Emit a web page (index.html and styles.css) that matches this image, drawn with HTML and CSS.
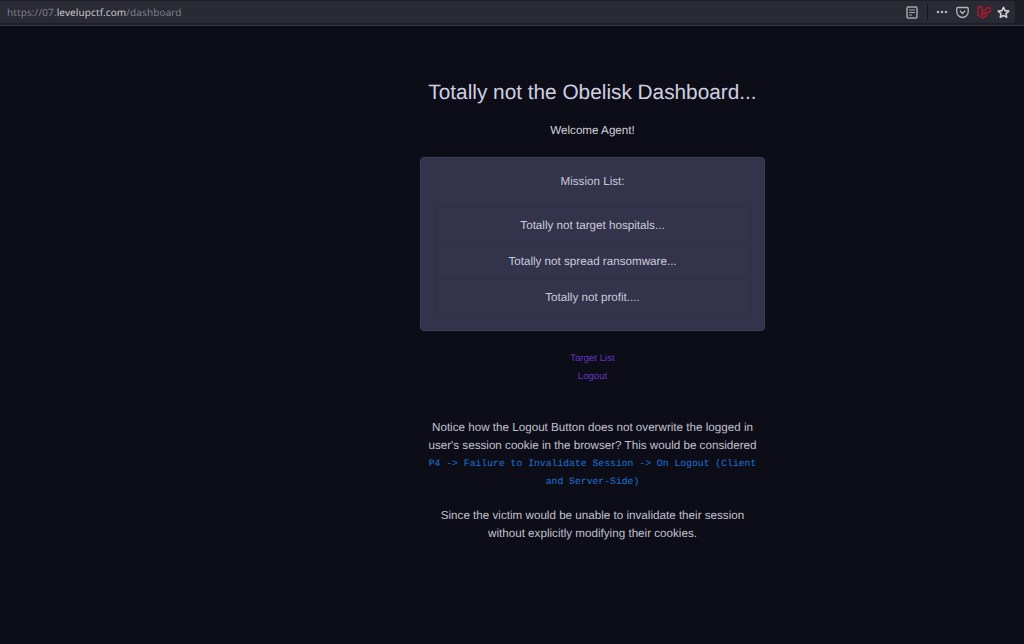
FILE: index.html
```html
<!DOCTYPE html>
<html lang="en">
<head>
<meta charset="utf-8">
<title>Dashboard</title>
<link rel="stylesheet" href="styles.css">
</head>
<body>
<header class="toolbar">
  <div class="urlbar">
    <div class="url"><span class="dim">https://07.</span><span class="host">levelupctf.com</span><span class="dim">/dashboard</span></div>
    <div class="actions">
      <svg class="icon reader" width="12" height="13" viewBox="0 0 12 13"><rect x="1" y="1" width="10" height="11" rx="1" fill="none" stroke="#a4a4a8" stroke-width="1.5"/><path d="M3 4h6M3 6.500h6M3 9h3" stroke="#a4a4a8" stroke-width="1.200"/></svg>
      <span class="sep"></span>
      <svg class="icon dots" width="12" height="14" viewBox="0 0 12 14"><circle cx="2" cy="7" r="1.300" fill="#b4b4b8"/><circle cx="6" cy="7" r="1.300" fill="#b4b4b8"/><circle cx="10" cy="7" r="1.300" fill="#b4b4b8"/></svg>
      <svg class="icon pocket" width="13" height="13" viewBox="0 0 13 13"><path d="M.8 2.500a1 1 0 0 1 1-1h9.400a1 1 0 0 1 1 1v3.300a5.700 5.700 0 0 1-11.400 0z" fill="none" stroke="#b4b4b8" stroke-width="1.300"/><path d="M3.900 4.800 6.500 7.400l2.600-2.600" fill="none" stroke="#b4b4b8" stroke-width="1.400"/></svg>
      <svg class="icon laravel" width="14" height="14" viewBox="0 0 14 14"><path d="M1 2.500v7.500l4.500 3 4-2.500V7M1 2.500l2-1 2 1V10l4.500-2.800M9.500 3.500l2-1.200 2 1.200V6l-4 2.300M5 7l4.500-3" fill="none" stroke="#a01a30" stroke-width="1.700"/></svg>
      <svg class="icon star" width="13" height="13" viewBox="0 0 14 14"><path d="M7 1.300 8.700 5l4 .5-3 2.700.8 4L7 10.200 3.500 12.200l.8-4-3-2.700 4-.5z" fill="none" stroke="#d0d0d4" stroke-width="1.700" stroke-linejoin="round"/></svg>
    </div>
  </div>
</header>
<main class="page">
  <div class="column">
    <h1 class="title">Totally not the Obelisk Dashboard...</h1>
    <p class="welcome">Welcome Agent!</p>
    <section class="card">
      <p class="card-title">Mission List:</p>
      <ul class="missions">
        <li class="mission">Totally not target hospitals...</li>
        <li class="mission">Totally not spread ransomware...</li>
        <li class="mission">Totally not profit....</li>
      </ul>
    </section>
    <nav class="links">
      <a class="link" href="#">Target List</a>
      <a class="link" href="#">Logout</a>
    </nav>
    <p class="notice">Notice how the Logout Button does not overwrite the logged in user's session cookie in the browser? This would be considered <code class="vrt">P4 -&gt; Failure to Invalidate Session -&gt; On Logout (Client and Server-Side)</code></p>
    <p class="notice second">Since the victim would be unable to invalidate their session without explicitly modifying their cookies.</p>
  </div>
</main>
</body>
</html>
```
FILE: styles.css
```css
* { box-sizing: border-box; }
html, body { margin: 0; height: 100%; }
body {
  background: #0d0d17;
  color: #c0c0d0;
  font-family: "Liberation Sans", Arial, sans-serif;
  font-size: 11.65px;
  line-height: 18px;
  text-rendering: geometricPrecision;
  overflow: hidden;
}
.toolbar {
  height: 26px;
  background: #1e1e26;
  border-bottom: 1px solid #3a3a42;
  padding: 1px 9px 1px 0;
}
.urlbar {
  height: 22px;
  background: #2a2a34;
  border-radius: 0 4px 4px 0;
  display: flex;
  align-items: center;
  justify-content: space-between;
  padding: 0 5px 0 7px;
}
.url { font-family: "Noto Sans", "Liberation Sans", sans-serif; font-size: 10px; color: #7d7d84; letter-spacing: .1px; }
.host { color: #c8c8cc; }
.actions { display: flex; align-items: center; }
.icon { display: block; margin-left: 7px; }
.reader { margin-right: 9px; }
.dots { margin-left: 8px; }
.pocket { margin-left: 8px; }
.laravel { margin-left: 8px; }
.star { margin-left: 6px; }
.sep { width: 1px; height: 16px; background: #16161c; }
.page { padding: 0 0 0 420px; }
.column { width: 345px; text-align: center; }
.title { margin: 0; padding-top: 53px; font-size: 20.8px; font-weight: 400; line-height: 28px; color: #cfcfe2; }
.welcome { margin: 15px 0 0; color: #d0d0dc; }
.card {
  margin-top: 17px;
  height: 174px;
  background: #33334b;
  border: 1px solid #3e3e56;
  border-radius: 4px;
  padding: 15px 14px 0;
}
.card-title { margin: 0; color: #c8c8d8; }
.missions { list-style: none; margin: 15px 0 0; padding: 0; border: 1px solid #2f2f45; border-radius: 4px; }
.mission { height: 36px; padding-top: 1px; line-height: 36px; color: #cbcbdb; border-bottom: 1px solid #2f2f45; }
.mission:last-child { border-bottom: 0; height: 35px; }
.links { margin-top: 19px; display: flex; flex-direction: column; align-items: center; }
.link { font-size: 9.6px; color: #6236c4; text-decoration: none; }
.notice { margin: 33px 0 0; padding: 0 7px; }
.notice.second { margin-top: 16px; }
.vrt { font-family: "Liberation Mono", monospace; font-size: 9.76px; line-height: 1; vertical-align: 1px; color: #1b72d8; }
```
